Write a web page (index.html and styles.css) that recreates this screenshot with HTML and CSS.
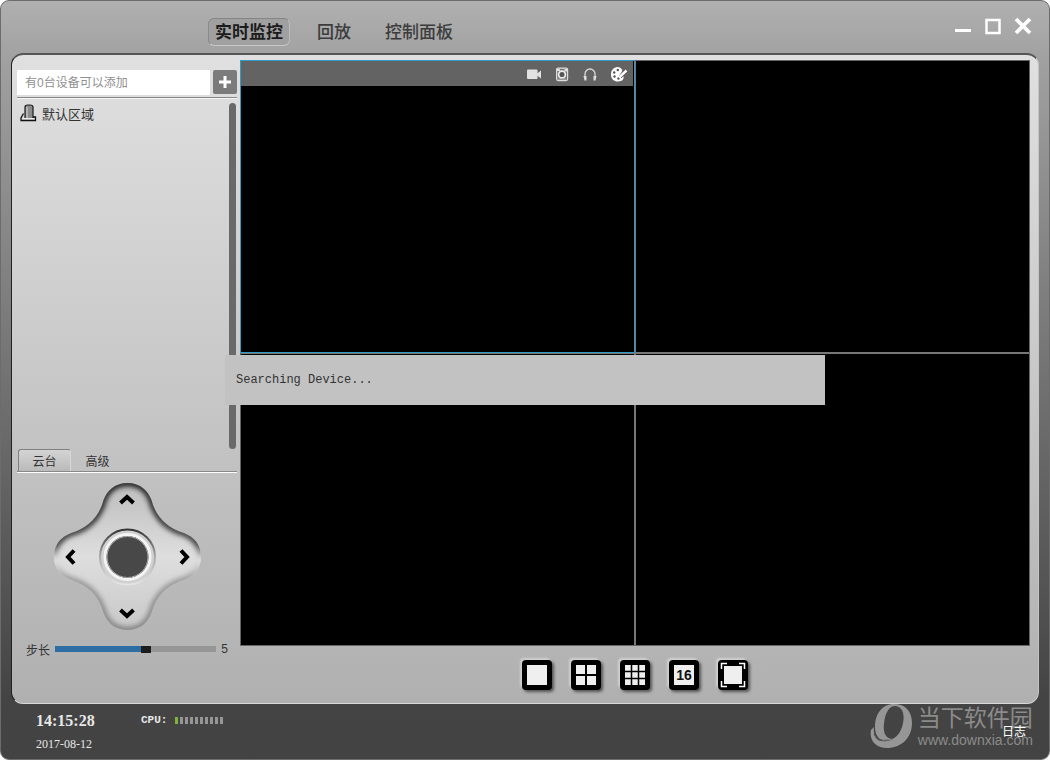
FILE: index.html
```html
<!DOCTYPE html>
<html lang="zh-CN">
<head>
<meta charset="utf-8">
<title>实时监控</title>
<link rel="stylesheet" href="styles.css">
</head>
<body>
<div class="window">
  <header class="titlebar">
    <nav class="nav">
      <button class="nav-item nav-item-active">实时监控</button>
      <button class="nav-item">回放</button>
      <button class="nav-item">控制面板</button>
    </nav>
    <div class="window-controls">
      <button class="window-button" aria-label="最小化"><svg width="18" height="18" viewBox="0 0 18 18"><path d="M1 13.500h16" stroke="#fff" stroke-width="3"/></svg></button>
      <button class="window-button" aria-label="最大化"><svg width="18" height="18" viewBox="0 0 18 18"><rect x="2.500" y="3" width="13" height="13" fill="none" stroke="#fff" stroke-width="2.500"/></svg></button>
      <button class="window-button" aria-label="关闭"><svg width="18" height="18" viewBox="0 0 18 18"><path d="M2 2l14 14M16 2L2 16" stroke="#fff" stroke-width="3.800"/></svg></button>
    </div>
  </header>

  <main class="panel">
    <aside class="sidebar">
      <form class="search">
        <input class="search-input" type="text" aria-label="设备" placeholder="有0台设备可以添加">
        <button class="add-button" type="button" aria-label="添加"><svg width="14" height="14" viewBox="0 0 14 14"><path d="M7 1v12M1 7h12" stroke="#fff" stroke-width="3"/></svg></button>
      </form>
      <div class="tree">
        <div class="tree-item">
          <svg width="17" height="18" viewBox="0 0 17 18"><path d="M5 15V3q0-2 3-2h2q3 0 3 2v11" fill="#8b8b8b" stroke="#1c1c1c" stroke-width="1.200"/><path d="M7 3v11" stroke="#ddd"/><path d="M3.500 9.500L1 14v2.500h14.500V13H13" fill="none" stroke="#111" stroke-width="1.300"/><path d="M2 14.500h12" stroke="#eee"/></svg>
          <span>默认区域</span>
        </div>
        <div class="scrollbar"></div>
      </div>
      <div class="tabs">
        <button class="tab tab-active">云台</button>
        <button class="tab">高级</button>
      </div>
      <div class="dpad">
        <svg class="dpad-shape" width="147" height="147" viewBox="0 0 147 147">
          <defs>
            <linearGradient id="face" x1="0" y1="0" x2="0" y2="1"><stop offset="0" stop-color="#bcbcbc"/><stop offset=".5" stop-color="#dedede"/><stop offset="1" stop-color="#c8c8c8"/></linearGradient>
            <linearGradient id="edge" x1="0" y1="0" x2="0" y2="1"><stop offset="0" stop-color="#222"/><stop offset=".42" stop-color="#444"/><stop offset=".52" stop-color="#e4e4e4"/><stop offset=".66" stop-color="#999"/><stop offset="1" stop-color="#858585"/></linearGradient>
            <linearGradient id="ring" x1="0" y1="0" x2="0" y2="1"><stop offset="0" stop-color="#333"/><stop offset=".5" stop-color="#aaa"/><stop offset="1" stop-color="#e4e4e4"/></linearGradient>
            <filter id="soft"><feGaussianBlur stdDeviation="2.500"/></filter>
            <path id="cross" d="M73.500 0C87 0 94 8 97.500 17C102 34 113 45 130 50C140 54 147 61 147 73.500C147 86 140 93 130 97C113 102 102 113 97.500 130C94 139 87 147 73.500 147C60 147 53 139 49.500 130C45 113 34 102 17 97C7 93 0 86 0 73.500C0 61 7 54 17 50C34 45 45 34 49.500 17C53 8 60 0 73.500 0Z"/>
            <clipPath id="crossClip"><use href="#cross"/></clipPath>
          </defs>
          <use href="#cross" fill="url(#face)"/>
          <g clip-path="url(#crossClip)"><use href="#cross" fill="none" stroke="url(#edge)" stroke-width="7" filter="url(#soft)"/></g>
          <circle cx="73.500" cy="74" r="27.500" fill="#d0d0d0" stroke="url(#ring)" stroke-width="2"/>
          <circle cx="73.500" cy="74" r="22.500" fill="#484848" stroke="#f4f4f4" stroke-width="3"/>
          <circle cx="73.500" cy="74" r="20.500" fill="#484848" stroke="#aaa"/>
        </svg>
        <button class="dpad-button dpad-up" aria-label="上"><svg width="18" height="18" viewBox="0 0 18 18"><path class="arrow" d="M2.500 12L9 6l6.500 6"/></svg></button>
        <button class="dpad-button dpad-left" aria-label="左"><svg width="18" height="18" viewBox="0 0 18 18"><path class="arrow" d="M12 2.500L6 9l6 6.500"/></svg></button>
        <button class="dpad-button dpad-right" aria-label="右"><svg width="18" height="18" viewBox="0 0 18 18"><path class="arrow" d="M6 2.500L12 9l-6 6.500"/></svg></button>
        <button class="dpad-button dpad-down" aria-label="下"><svg width="18" height="18" viewBox="0 0 18 18"><path class="arrow" d="M2.500 6L9 12l6.500-6"/></svg></button>
      </div>
      <div class="step">
        <label for="step">步长</label>
        <input id="step" class="step-range" type="range" min="1" max="8" value="5">
        <output for="step">5</output>
      </div>
    </aside>

    <section class="stage">
      <div class="videos">
        <div class="video video-selected">
          <div class="video-bar">
            <button class="video-button" aria-label="录像"><svg width="16" height="16" viewBox="0 0 16 16"><rect x="1" y="3.500" width="10.500" height="9.500" rx="1" fill="#e2e2e2"/><path d="M10.500 8L15 4.500v8L10.500 9z" fill="#e2e2e2"/></svg></button>
            <button class="video-button" aria-label="截图"><svg width="16" height="16" viewBox="0 0 16 16"><rect x="2.600" y="2.100" width="11" height="12.500" rx="1.500" fill="#777" stroke="#ddd" stroke-width="1.200"/><path d="M3 3h3v2H3zM10.500 3H13v2.500h-2.500z" fill="#ddd"/><circle cx="8" cy="8.500" r="3.400" fill="#555" stroke="#eee" stroke-width="1.700"/><path d="M4 13h8" stroke="#bbb"/></svg></button>
            <button class="video-button" aria-label="声音"><svg width="16" height="16" viewBox="0 0 16 16"><path d="M3 13V8a5 5 0 0 1 10 0v5" fill="none" stroke="#d8d8d8" stroke-width="1.300"/><path d="M1.500 10h3v4.500h-2zM14.500 10h-3v4.500h2z" fill="#ddd"/></svg></button>
            <button class="video-button" aria-label="色彩"><svg width="18" height="16" viewBox="0 0 18 16"><path d="M8 1C3 1 1 5 1 8.500C1 13 4 15.500 8 15.500c5 0 6-3 5.500-5C13 9 11 10.500 10 9.500S13 6 12 3.500Q10.500 1 8 1Z" fill="#fff"/><g fill="#555"><circle cx="4.200" cy="6.500" r="1.200"/><circle cx="7.800" cy="4" r="1.200"/><circle cx="4.500" cy="10.500" r="1.200"/><circle cx="8.500" cy="12.500" r="1.200"/></g><path d="M16.500 4.500L10 11" stroke="#555" stroke-width="3.500"/><path d="M16.500 4.500L9 11.500" stroke="#fff" stroke-width="2.400"/></svg></button>
          </div>
        </div>
        <div class="video"></div>
        <div class="video"></div>
        <div class="video"></div>
      </div>
      <div class="layouts">
        <button class="layout-button" aria-label="1 画面"><svg width="20" height="20" viewBox="0 0 20 20"><rect width="20" height="20" fill="#efefef"/></svg></button>
        <button class="layout-button" aria-label="4 画面"><svg width="20" height="20" viewBox="0 0 20 20"><rect width="20" height="20" fill="#efefef"/><path d="M10 0v20M0 10h20" stroke="#000" stroke-width="2"/></svg></button>
        <button class="layout-button" aria-label="9 画面"><svg width="20" height="20" viewBox="0 0 20 20"><rect width="20" height="20" fill="#efefef"/><path d="M6.500 0v20M13.500 0v20M0 6.500h20M0 13.500h20" stroke="#000" stroke-width="1.500"/></svg></button>
        <button class="layout-button"><span class="layout-number">16</span></button>
        <button class="layout-button" aria-label="全屏"><svg width="26" height="26" viewBox="0 0 26 26"><rect x="4" y="4" width="18" height="18" fill="#efefef"/><path d="M1.500 7V1.500H7M19 1.500h5.500V7M24.500 19v5.500H19M7 24.500H1.500V19" fill="none" stroke="#fff" stroke-width="1.500"/></svg></button>
      </div>
    </section>
  </main>

  <footer class="status">
    <div class="clock">
      <time class="clock-time">14:15:28</time>
      <time class="clock-date">2017-08-12</time>
    </div>
    <div class="cpu">
      <span>CPU:</span>
      <div class="cpu-bars"><i class="cpu-on"></i><i></i><i></i><i></i><i></i><i></i><i></i><i></i><i></i><i></i></div>
    </div>
    <button class="log-button">日志</button>
  </footer>

  <div class="watermark">
    <svg width="42" height="45" viewBox="0 0 42 45"><path fill-rule="evenodd" d="M24 0C12 0 5 10 5 23c0 6 2 10 6 13C16 39 20 36 23 35C15 35 13 28 14 20C15 9 19 2 25 2C32 2 35 10 33 19C31 30 25 36 15 37C7 38 3 33 4 23L1 26C-1 37 6 44 17 44C31 44 42 34 42 19C42 7 35 0 24 0Z" fill="#969696"/><path d="M4 30q3 8 15 6" stroke="#555" stroke-width="1" fill="none"/></svg>
    <div class="watermark-text">
      <span class="watermark-name">当下软件园</span>
      <span class="watermark-url">www.downxia.com</span>
    </div>
  </div>
  <div class="toast" role="status">Searching Device...</div>
</div>
</body>
</html>
```

FILE: styles.css
```css
* { box-sizing: border-box; }

body {
  margin: 0;
  background: #fff;
  font-family: "Liberation Sans", "Noto Sans CJK SC", sans-serif;
  font-size: 12px;
  color: #333;
}

button {
  margin: 0;
  padding: 0;
  border: 0;
  background: none;
  font: inherit;
  color: inherit;
}

svg { display: block; }

.window {
  position: relative;
  display: flex;
  flex-direction: column;
  min-height: 100vh;
  border: 1px solid #6c6c6c;
  border-radius: 9px;
  background: linear-gradient(#b0b0b0, #a0a0a0 8%, #444 92%, #434343);
}

/* Title bar */
.titlebar {
  display: flex;
  justify-content: space-between;
  height: 52px;
  padding: 10px 11px 0 207px;
}

.nav {
  display: flex;
  align-items: flex-start;
  gap: 14px;
  padding-top: 7px;
}

.nav-item {
  height: 28px;
  padding: 2px 6px 0;
  border: 1px solid transparent;
  border-radius: 6px;
  font-size: 17px;
  font-weight: 500;
  line-height: 24px;
  color: #3c3c3c;
}

.nav-item + .nav-item { margin-left: 6px; }

.nav-item-active {
  border-color: #858585 #bdbdbd #c8c8c8 #8a8a8a;
  background: #a0a0a0;
  font-weight: 700;
  color: #1c1c1c;
}

.window-controls { display: flex; }

.window-button {
  display: grid;
  place-items: center;
  width: 30px;
  height: 30px;
}

/* Main panel */
.panel {
  flex: 1;
  display: flex;
  margin: 0 10px;
  border: solid;
  border-width: 2px 1px 1px;
  border-color: #555 #c4c4c4 #d8d8d8 #222;
  border-radius: 12px;
  background: linear-gradient(#e0e0e0, #c8c8c8 50%, #b0b0b0);
}

.sidebar {
  display: flex;
  flex-direction: column;
  width: 225px;
  padding: 15px 0 0 5px;
}

.search {
  display: flex;
  gap: 3px;
  padding-bottom: 2px;
  border-bottom: 1px solid #888;
  box-shadow: 0 1px #f4f4f4;
}

.search-input {
  flex: 1;
  min-width: 0;
  height: 25px;
  padding: 0 8px;
  border: 0;
  background: #fff;
  font: inherit;
}

.search-input::placeholder { color: #909090; }

.add-button {
  display: grid;
  place-items: center;
  width: 24px;
  height: 24px;
  border-radius: 2px;
  background: #7b7b7b;
}

.tree {
  flex: 1;
  display: flex;
  justify-content: space-between;
  padding: 5px 1px 0 3px;
}

.tree-item {
  display: flex;
  align-items: center;
  gap: 5px;
  height: 20px;
  font-size: 13px;
}

.scrollbar {
  width: 7px;
  border-radius: 4px;
  background: #696969;
}

.tabs {
  display: flex;
  padding-left: 1px;
  border-bottom: 1px solid #888;
  box-shadow: 0 1px #fff;
}

.tab {
  width: 53px;
  height: 22px;
  border: 1px solid transparent;
  border-bottom: 0;
  border-radius: 3px 3px 0 0;
  line-height: 24px;
}

.tab-active {
  border-color: #808080 #d8d8d8 #808080 #808080;
  background: linear-gradient(#d4d4d4, #bababa);
}

/* Pan and tilt pad */
.dpad {
  display: grid;
  grid-template: repeat(3, 1fr) / repeat(3, 1fr);
  align-self: center;
  width: 147px;
  height: 147px;
  margin: 11px 0 8px;
}

.dpad-shape { grid-area: 1 / 1 / 4 / 4; }

.dpad-button { display: grid; padding: 8px; }
.dpad-up { grid-area: 1 / 2; place-items: start center; }
.dpad-left { grid-area: 2 / 1; place-items: center start; }
.dpad-right { grid-area: 2 / 3; place-items: center end; }
.dpad-down { grid-area: 3 / 2; place-items: end center; }

.arrow { fill: none; stroke: #000; stroke-width: 4; }

.step {
  display: flex;
  align-items: center;
  gap: 5px;
  height: 22px;
  margin-bottom: 43px;
  padding: 0 9px;
}

.step-range {
  flex: 1;
  min-width: 0;
  height: 6px;
  margin: 0;
  appearance: none;
  background: linear-gradient(90deg, #2d6da3 57%, #969696 57%);
}

.step-range::-webkit-slider-thumb {
  appearance: none;
  width: 10px;
  height: 7px;
  background: #1c1c1c;
}

/* Video area */
.stage {
  flex: 1;
  display: flex;
  flex-direction: column;
  padding: 5px 8px 0 3px;
}

.videos {
  flex: 1;
  display: grid;
  grid-template: repeat(2, 1fr) / repeat(2, 1fr);
  gap: 2px;
  border: 1px solid #666;
  background: #777;
}

.video { background: #000; }

.video-selected {
  margin: -1px;
  border: 1px solid #2f9cc8;
}

.video-bar {
  display: flex;
  justify-content: flex-end;
  align-items: center;
  gap: 12px;
  height: 25px;
  margin-right: 1px;
  padding-right: 5px;
  background: #636363;
}

.layouts {
  display: flex;
  justify-content: center;
  gap: 19px;
  height: 57px;
  padding-top: 14px;
}

.layout-button {
  display: grid;
  place-items: center;
  width: 30px;
  height: 30px;
  border-radius: 4px;
  background: #000;
  box-shadow: -2px -2px 2px #d0d0d0, 2px 2px 3px #555;
}

.layout-number {
  width: 20px;
  height: 20px;
  background: #efefef;
  font-size: 14px;
  font-weight: 700;
  line-height: 21px;
  color: #111;
}

/* Status bar */
.status {
  display: flex;
  align-items: flex-start;
  height: 55px;
  padding: 6px 23px 0 35px;
  color: #e8e8e8;
}

.clock {
  display: flex;
  flex-direction: column;
  width: 105px;
  font-family: "Liberation Serif", serif;
}

.clock-time { font-size: 16px; font-weight: 700; line-height: 22px; }
.clock-date { font-size: 12px; line-height: 24px; }

.cpu {
  display: flex;
  align-items: center;
  gap: 8px;
  height: 20px;
  font-family: "Liberation Mono", monospace;
  font-size: 11px;
  font-weight: 700;
}

.cpu-bars { display: flex; gap: 2px; }
.cpu-bars i { width: 3px; height: 7px; background: #969696; }
.cpu-bars .cpu-on { background: #7bb53b; }

.log-button {
  z-index: 1;
  margin: 13px 0 0 auto;
  line-height: 18px;
  color: #fff;
}

.watermark {
  position: absolute;
  right: 16px;
  bottom: 10px;
  display: flex;
  gap: 6px;
  color: #8b8b8b;
}

.watermark-text { display: flex; flex-direction: column; }
.watermark-name { font-size: 23px; line-height: 28px; }
.watermark-url { font-size: 14px; line-height: 17px; }

/* Device search message */
.toast {
  position: absolute;
  top: 50%;
  left: 50%;
  width: 600px;
  padding: 0 11px;
  background: #c2c2c2;
  font-family: "Liberation Mono", monospace;
  font-size: 12px;
  line-height: 50px;
  transform: translate(-50%, -50%);
}
```
